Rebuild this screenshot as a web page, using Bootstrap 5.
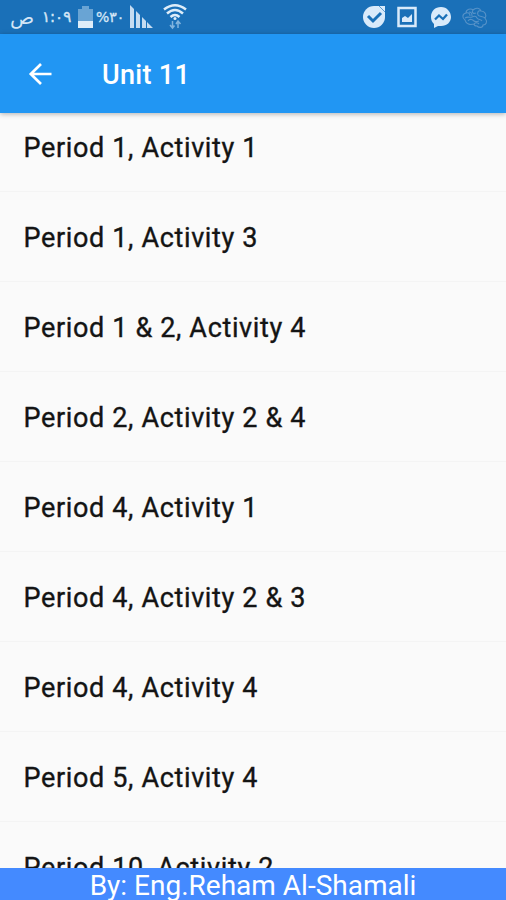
<!DOCTYPE html>
<html lang="en">
<head>
<meta charset="utf-8">
<meta name="viewport" content="width=device-width, initial-scale=1">
<title>Unit 11</title>
<link href="https://cdn.jsdelivr.net/npm/bootstrap@5.3.0/dist/css/bootstrap.min.css" rel="stylesheet">
<style>
body { font-family: Roboto, "DejaVu Sans", sans-serif; background: #fafafa; }
.status-bar { height: 34px; background: #1a70b8; color: #d5e6f6; padding: 0 18px 0 10px; }
.status-bar svg { display: block; flex: none; }
.arabic { font-family: "DejaVu Sans", sans-serif; line-height: 1; white-space: nowrap; }
.meridiem { width: 32px; font-size: 20px; }
.clock { width: 35px; font-size: 15px; letter-spacing: -1px; -webkit-text-stroke: .4px #d5e6f6; }
.charge { width: 33px; font-size: 14px; letter-spacing: -.5px; margin-left: 3px; -webkit-text-stroke: .3px #d5e6f6; }
.picture-icon { margin-left: 11px; }
.chat-icon { margin-left: 13px; }
.brain-icon { margin-left: 10px; }
.app-bar { height: 79px; background: #2196f3; padding-left: 24px; box-shadow: 0 1px 5px rgba(0,0,0,.3); z-index: 2; }
.app-title { font-size: 27px; font-weight: 500; margin-left: 46px; padding-top: 4px; letter-spacing: .3px; line-height: 1; }
.periods { margin-top: -11px; }
.periods .list-group-item { height: 90px; padding: 4px 23.500px 0; background: #fafafa; color: #141414; border-color: #f4f4f4; font-size: 27px; font-weight: 400; letter-spacing: .65px; -webkit-text-stroke: .35px #141414; line-height: 1.2; }
.periods .list-group-item:last-child { padding-top: 2px; }
.credit { height: 32px; background: #448aff; font-size: 28px; line-height: 35px; }
</style>
</head>
<body>
<div class="vh-100 d-flex flex-column overflow-hidden">
  <div class="status-bar d-flex align-items-center justify-content-between flex-shrink-0">
    <div class="d-flex align-items-center" dir="ltr">
      <span class="arabic meridiem">ص</span>
      <span class="arabic clock">١:٠٩</span>
      <svg width="16" height="34" viewBox="0 0 16 34"><path fill="#69a4d4" d="M5 6h7v3h4v13H1V9h4z"/><path fill="#deedf9" d="M1 21h15v7H1z"/></svg>
      <span class="arabic charge"><bdo dir="ltr">%٣٠</bdo></span>
      <svg width="24" height="34" viewBox="0 0 24 34" fill="#c5dcf1"><path d="M1 5l4 4v19H1zM7 11l4 4v13H7zM13 17l4 4v7h-4zM18 22l6 6h-6z"/></svg>
      <svg class="ms-2" width="28" height="34" viewBox="0 0 28 34" fill="none" stroke="#deedf9" stroke-width="2.500"><path d="M3 9.500Q14 1 25 9.500M6 13.500q8-7 16 0M9.500 17q4.500-4 9 0"/><circle cx="14" cy="18.500" r="1.500" fill="#deedf9" stroke="none"/><path stroke="#81b4de" stroke-width="1.500" d="M11.500 21v7m-2.500-3l2.500 3 2-2.500M17 28v-7m-2 3l2-3 2.500 3"/></svg>
    </div>
    <div class="d-flex align-items-center">
      <svg width="24" height="24" viewBox="0 0 24 24"><path fill="#d9eafa" d="M12 1h11v11A11 11 0 1 1 12 1z"/><path d="M17 1l6 6" stroke="#5d9cd1" stroke-width="1"/><path d="M6 11l5 5 8-8" fill="none" stroke="#1a70b8" stroke-width="3"/></svg>
      <svg class="picture-icon" width="20" height="24" viewBox="0 0 20 24"><path d="M1.500 3h17v18h-17z" fill="none" stroke="#d9eafa" stroke-width="2.500"/><path fill="#d9eafa" d="M5 17v-4l3-2 3 2 4-4v8z"/></svg>
      <svg class="chat-icon" width="22" height="24" viewBox="0 0 22 24"><path fill="#d9eafa" d="M11 2C5 2 1 6 1 12c0 3 1 5 3 7v4l4-2h3c6 0 10-4 10-9S17 2 11 2z"/><path d="M5 14.500l4-4 4 3.500 4-4.500" fill="none" stroke="#1a70b8" stroke-width="2.300"/></svg>
      <svg class="brain-icon" width="26" height="24" viewBox="0 0 26 24" fill="none" stroke="#5692c8" stroke-width="1.100"><path d="M3 15C0 13 0 9 4 8c0-4 5-5 7-3 3-3 7-2 8 1 4 0 6 4 4 7 3 4 1 7-2 7 0 3-4 3-6 1-3 0-3-2-3-2-4 1-8 0-9-4zM4 8c3-1 4 1 4 3M11 5c-2 3 1 4 3 3M19 6c-3-1-4 2-3 4s5 1 7 3M3 13c3-2 5 0 7-1s4-1 5 1 4 1 5 3M6 16c2-3 5-1 6 0s2 1 5 0M12 19c2-2 4-1 5 0M7 7c2 0 3 2 3 4"/></svg>
    </div>
  </div>
  <header class="app-bar d-flex align-items-center flex-shrink-0 text-white position-relative">
    <svg width="32" height="32" viewBox="0 0 32 32" fill="none" stroke="#fff" stroke-width="2.700"><path d="M27.500 16H7M17 6L6.800 16 17 26"/></svg>
    <h1 class="app-title mb-0">Unit 11</h1>
  </header>
  <main class="flex-grow-1 overflow-hidden">
    <div class="periods list-group list-group-flush">
      <div class="list-group-item d-flex align-items-center">Period 1, Activity 1</div>
      <div class="list-group-item d-flex align-items-center">Period 1, Activity 3</div>
      <div class="list-group-item d-flex align-items-center">Period 1 &amp; 2, Activity 4</div>
      <div class="list-group-item d-flex align-items-center">Period 2, Activity 2 &amp; 4</div>
      <div class="list-group-item d-flex align-items-center">Period 4, Activity 1</div>
      <div class="list-group-item d-flex align-items-center">Period 4, Activity 2 &amp; 3</div>
      <div class="list-group-item d-flex align-items-center">Period 4, Activity 4</div>
      <div class="list-group-item d-flex align-items-center">Period 5, Activity 4</div>
      <div class="list-group-item d-flex align-items-center">Period 10, Activity 2</div>
    </div>
  </main>
  <footer class="credit flex-shrink-0 text-center text-white overflow-hidden">By: Eng.Reham Al-Shamali</footer>
</div>
<script src="https://cdn.jsdelivr.net/npm/bootstrap@5.3.0/dist/js/bootstrap.bundle.min.js"></script>
</body>
</html>
